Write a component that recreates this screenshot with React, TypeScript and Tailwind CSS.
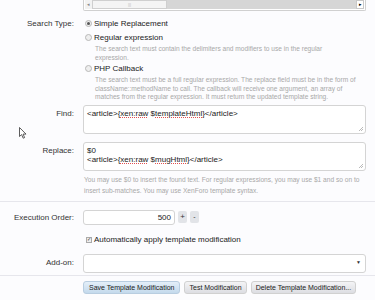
import React from 'react'

function Radio({ checked }: { checked?: boolean }) {
  return (
    <span className="mt-[1px] flex h-[7px] w-[7px] shrink-0 items-center justify-center rounded-full border border-[#b8b8b8] bg-[#eeeeee]">
      {checked && <span className="h-[3px] w-[3px] rounded-full bg-[#555]" />}
    </span>
  )
}

function Grip() {
  return (
    <svg className="absolute bottom-[2px] right-[2px]" width="5" height="5" viewBox="0 0 5 5">
      <path d="M1 5L5 1M3 5L5 3" stroke="#aaa" strokeWidth="0.8" />
    </svg>
  )
}

function Spell({ children }: { children: React.ReactNode }) {
  return <span className="underline decoration-dotted decoration-[#e05050] decoration-1 underline-offset-[1px]">{children}</span>
}

function Row({ label, children, className = '' }: { label?: string; children: React.ReactNode; className?: string }) {
  return (
    <div className={`flex ${className}`}>
      <div className="w-[83px] shrink-0 pr-[9px] text-right text-[8px] leading-[10px] text-[#333]">{label}</div>
      <div className="w-[283px]">{children}</div>
    </div>
  )
}

export default function App() {
  return (
    <div className="relative h-[300px] w-[375px] overflow-hidden bg-[#fcfcfe] font-['Liberation_Sans',Arial,sans-serif] text-[#222]">
      {/* textarea bottom with scrollbar */}
      <div className="ml-[83px] w-[283px] rounded-b-[2px] border-x border-b border-[#d0d0d0] bg-white px-[1px] pb-[1px]">
        <div className="flex h-[9px] items-stretch bg-[#d6d6d6]">
          <div className="flex w-[7px] items-center justify-center bg-[#f2f2f2] text-[5px] text-[#888]">◂</div>
          <div className="flex w-[75px] items-center justify-center border border-[#cfcfcf] bg-[#f4f4f4] text-[4px] text-[#bbb]">|||</div>
          <div className="flex-1" />
          <div className="flex w-[8px] items-center justify-center border border-[#c8c8c8] bg-white text-[5px] text-black">▸</div>
        </div>
      </div>

      {/* search type */}
      <Row label="Search Type:" className="mt-[8px]">
        <div className="flex flex-col pl-[2px]">
          <label className="flex items-start gap-[2px] text-[8px] leading-[10px]">
            <Radio checked />
            <span>Simple Replacement</span>
          </label>
          <label className="mt-[4px] flex items-start gap-[2px] text-[8px] leading-[10px]">
            <Radio />
            <span>Regular expression</span>
          </label>
          <p className="mt-[2px] pl-[10px] pr-[20px] text-[6.6px] leading-[8.5px] text-[#a8a8a8]">
            The search text must contain the delimiters and modifiers to use in the regular expression.
          </p>
          <label className="mt-[2px] flex items-start gap-[2px] text-[8px] leading-[10px]">
            <Radio />
            <span>PHP Callback</span>
          </label>
          <p className="mt-[2px] pl-[10px] text-[6.6px] leading-[8.5px] text-[#a8a8a8]">
            The search text must be a full regular expression. The replace field must be in the form of className::methodName to call. The callback will receive one argument, an array of matches from the regular expression. It must return the updated template string.
          </p>
        </div>
      </Row>

      {/* find */}
      <Row label="Find:" className="mt-[7px]">
        <div className="relative -mt-[4px] h-[29px] rounded-[3px] border border-[#d4d4d4] bg-white px-[3px] pt-[3px] text-[8px] leading-[9px] text-[#222]">
          &lt;article&gt;{'{'}<Spell>xen:raw</Spell> $<Spell>templateHtml</Spell>{'}'}&lt;/article&gt;
          <Grip />
        </div>
      </Row>

      {/* replace */}
      <Row label="Replace:" className="mt-[12px]">
        <div className="relative -mt-[4px] h-[29px] rounded-[3px] border border-[#d4d4d4] bg-white px-[3px] pt-[3px] text-[8px] leading-[9px] text-[#222]">
          <div>$0</div>
          <div>
            &lt;article&gt;{'{'}<Spell>xen:raw</Spell> $<Spell>mugHtml</Spell>{'}'}&lt;/article&gt;
          </div>
          <Grip />
        </div>
        <p className="mt-[3px] pl-[1px] text-[6.6px] leading-[11px] text-[#a8a8a8]">
          You may use $0 to insert the found text. For regular expressions, you may use $1 and so on to insert sub-matches. You may use XenForo template syntax.
        </p>
      </Row>

      <div className="mt-[5px] h-px w-full bg-[#e6e6ec]" />

      {/* execution order */}
      <Row label="Execution Order:" className="mt-[11px]">
        <div className="-mt-[3px] flex items-center gap-[3px]">
          <div className="h-[15px] w-[92px] rounded-[3px] border border-[#d4d4d4] bg-white pr-[3px] text-right text-[8px] leading-[13px]">500</div>
          <div className="flex h-[12px] w-[9px] items-center justify-center rounded-[2px] bg-[#e2e4e8] text-[8px] text-[#333]">+</div>
          <div className="flex h-[12px] w-[9px] items-center justify-center rounded-[2px] bg-[#e2e4e8] text-[7px] text-[#333]">-</div>
        </div>
      </Row>

      <Row className="mt-[10px]">
        <label className="flex items-center gap-[2px] pl-[3px] text-[8px] leading-[10px]">
          <span className="flex h-[6px] w-[6px] items-center justify-center border border-[#aaa] bg-[#eee] text-[5px] leading-none text-[#333]">✓</span>
          <span>Automatically apply template modification</span>
        </label>
      </Row>

      {/* add-on */}
      <Row label="Add-on:" className="mt-[13px]">
        <div className="-mt-[4px] flex h-[19px] items-center justify-end rounded-[3px] border border-[#d4d4d4] bg-white pr-[4px] text-[5px] text-[#333]">▼</div>
      </Row>

      <div className="mt-[2px] h-px w-full bg-[#e6e6ec]" />

      {/* buttons */}
      <div className="ml-[83px] mt-[5px] flex gap-[4px]">
        <button className="h-[13px] rounded-[3px] border border-[#b8cde0] bg-gradient-to-b from-[#e4eff9] to-[#c3d9ec] px-[5px] text-[7px] leading-[11px] text-[#222]">Save Template Modification</button>
        <button className="h-[13px] rounded-[3px] border border-[#d0d0d0] bg-gradient-to-b from-[#f4f4f6] to-[#dcdde2] px-[4px] text-[7px] leading-[11px] text-[#222]">Test Modification</button>
        <button className="h-[13px] rounded-[3px] border border-[#d0d0d0] bg-gradient-to-b from-[#f4f4f6] to-[#dcdde2] px-[4px] text-[7px] leading-[11px] text-[#222]">Delete Template Modification...</button>
      </div>

      {/* mouse pointer */}
      <svg className="absolute left-[19px] top-[127px]" width="8" height="12" viewBox="0 0 8 12">
        <path d="M0.5 0.5L0.5 9.5L2.6 7.6L4.2 11.2L5.6 10.6L4.1 7.1L7 7.1Z" fill="white" stroke="#333" strokeWidth="0.8" strokeLinejoin="round" />
      </svg>
    </div>
  )
}
